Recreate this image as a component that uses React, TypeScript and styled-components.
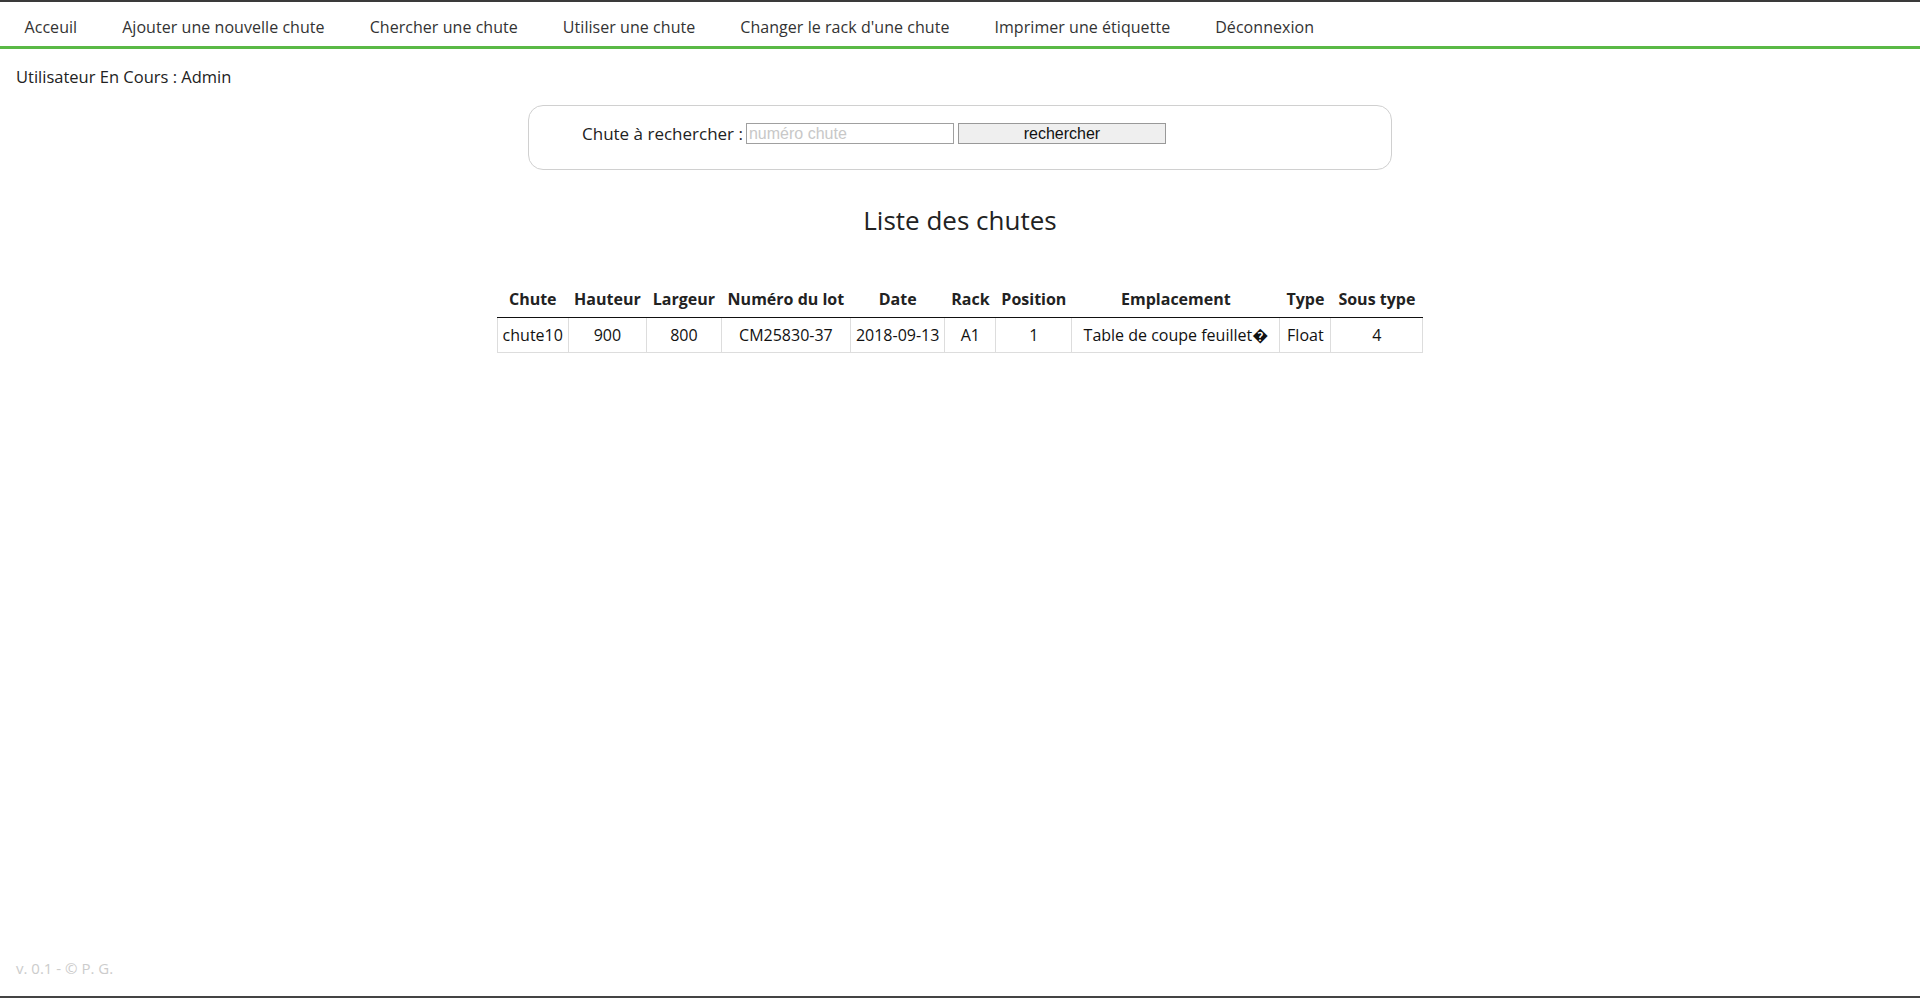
import React from 'react';
import styled, { createGlobalStyle } from 'styled-components';

const GlobalStyle = createGlobalStyle`
  html, body {
    margin: 0;
    padding: 0;
    background: #fff;
  }
  body {
    font-family: 'Open Sans', 'Liberation Sans', sans-serif;
    color: #222;
  }
`;

const Page = styled.div`
  min-height: 100vh;
  display: flex;
  flex-direction: column;
  box-sizing: border-box;
  border-top: 2px solid #3a3a3a;
  border-bottom: 2px solid #444;
`;

const NavBar = styled.nav`
  height: 47px;
  box-sizing: border-box;
  border-bottom: 3px solid #5ab946;
  display: flex;
  align-items: center;
  padding: 5px 0 0 2px;
`;

const NavLink = styled.a`
  padding: 0 22.5px;
  font-size: 16px;
  letter-spacing: 0.05px;
  color: #333;
  text-decoration: none;
  white-space: nowrap;
  cursor: pointer;
`;

const CurrentUser = styled.div`
  margin: 16px 0 0 16px;
  font-size: 16.5px;
  line-height: 24px;
  color: #222;
`;

const SearchBox = styled.div`
  width: 45%;
  margin: 16px auto 0;
  box-sizing: border-box;
  height: 65px;
  border: 1px solid #d0d0d0;
  border-radius: 15px;
  padding: 17px 0 0 53px;
  display: flex;
  align-items: flex-start;
`;

const SearchForm = styled.form`
  display: flex;
  align-items: center;
  height: 21px;
`;

const Label = styled.label`
  font-size: 17px;
  margin-right: 3px;
  color: #222;
`;

const SearchInput = styled.input`
  width: 208px;
  height: 21px;
  box-sizing: border-box;
  border: 1px solid #a0a0a0;
  padding: 0 2px;
  font-family: 'Liberation Sans', Arial, sans-serif;
  font-size: 16px;
  outline: none;

  &::placeholder {
    color: #c8c8c8;
  }
`;

const SearchButton = styled.button`
  width: 208px;
  height: 21px;
  margin-left: 4px;
  box-sizing: border-box;
  border: 1px solid #999;
  background: #efefef;
  padding: 0;
  font-family: 'Liberation Sans', Arial, sans-serif;
  font-size: 16px;
  color: #111;
`;

const Title = styled.h2`
  margin: 32px 0 0;
  text-align: center;
  font-size: 26px;
  font-weight: 400;
  line-height: 36px;
  color: #222;
`;

const Table = styled.table`
  margin: 44px auto 0;
  border-collapse: collapse;
  font-size: 16px;
  color: #111;
`;

const HeadCell = styled.th<{ $w: number }>`
  width: ${(p) => p.$w}px;
  box-sizing: border-box;
  padding: 0 5px;
  height: 35px;
  font-weight: 700;
  font-size: 16px;
  color: #222;
  border-bottom: 1px solid #111;
  white-space: nowrap;
  text-align: center;
`;

const Cell = styled.td`
  height: 34px;
  padding: 0 5px;
  border: 1px solid #ddd;
  text-align: center;
  white-space: nowrap;
`;

const Footer = styled.footer`
  margin-top: auto;
  padding: 0 0 18px 16px;
  font-size: 15px;
  line-height: 20px;
  color: #ccc;
`;

const links = [
  'Acceuil',
  'Ajouter une nouvelle chute',
  'Chercher une chute',
  'Utiliser une chute',
  "Changer le rack d'une chute",
  'Imprimer une étiquette',
  'Déconnexion',
];

const columns: [string, number][] = [
  ['Chute', 71],
  ['Hauteur', 78],
  ['Largeur', 75],
  ['Numéro du lot', 129],
  ['Date', 94],
  ['Rack', 51],
  ['Position', 76],
  ['Emplacement', 208],
  ['Type', 51],
  ['Sous type', 92],
];

const chutes = [
  {
    chute: 'chute10',
    hauteur: 900,
    largeur: 800,
    lot: 'CM25830-37',
    date: '2018-09-13',
    rack: 'A1',
    position: 1,
    emplacement: 'Table de coupe feuillet\uFFFD',
    type: 'Float',
    sousType: 4,
  },
];

const App = () => {
  return (
    <>
      <GlobalStyle />
      <Page>
        <NavBar>
          {links.map((l) => (
            <NavLink key={l}>{l}</NavLink>
          ))}
        </NavBar>

        <CurrentUser>Utilisateur En Cours : Admin</CurrentUser>

        <SearchBox>
          <SearchForm onSubmit={(e) => e.preventDefault()}>
            <Label htmlFor="chute">Chute à rechercher :</Label>
            <SearchInput id="chute" placeholder="numéro chute" />
            <SearchButton type="submit">rechercher</SearchButton>
          </SearchForm>
        </SearchBox>

        <Title>Liste des chutes</Title>

        <Table>
          <thead>
            <tr>
              {columns.map(([name, w]) => (
                <HeadCell key={name} $w={w}>
                  {name}
                </HeadCell>
              ))}
            </tr>
          </thead>
          <tbody>
            {chutes.map((c) => (
              <tr key={c.chute}>
                <Cell>{c.chute}</Cell>
                <Cell>{c.hauteur}</Cell>
                <Cell>{c.largeur}</Cell>
                <Cell>{c.lot}</Cell>
                <Cell>{c.date}</Cell>
                <Cell>{c.rack}</Cell>
                <Cell>{c.position}</Cell>
                <Cell>{c.emplacement}</Cell>
                <Cell>{c.type}</Cell>
                <Cell>{c.sousType}</Cell>
              </tr>
            ))}
          </tbody>
        </Table>

        <Footer>v. 0.1 - © P. G.</Footer>
      </Page>
    </>
  );
};

export default App;
